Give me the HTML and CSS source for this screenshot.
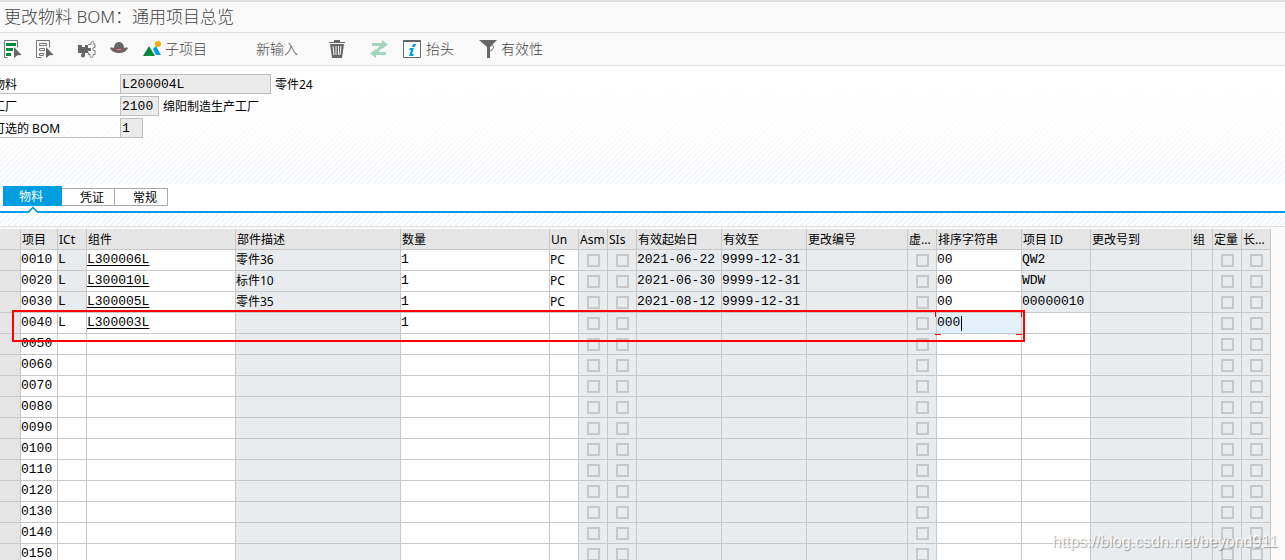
FILE: index.html
```html
<!DOCTYPE html>
<html lang="zh-CN">
<head>
<meta charset="utf-8">
<title>更改物料 BOM：通用项目总览</title>
<link rel="stylesheet" href="styles.css">
</head>
<body>
<div class="app">
  <header class="titlebar"><h1>更改物料 BOM：通用项目总览</h1></header>
  <nav class="toolbar">
    <button class="tool tool-select" aria-label="全选">
      <svg width="18" height="18" viewBox="0 0 18 18"><path d="M.5 17.500V.5h13v7M.5 17.500h3" fill="none" stroke="#777"/><path d="M2 3h10v3H2zM2 8h7v3H2zM2 13h5v3H2z" fill="#008a3b"/><path d="M10 7l7.500 8-4 .3-3.500 2.700z" fill="#666"/></svg>
    </button>
    <button class="tool tool-deselect" aria-label="取消选择">
      <svg width="18" height="18" viewBox="0 0 18 18"><path d="M.5 17.500V.5h13v7M.5 17.500h5M3.500 3.500h7v2h-7zM3.500 8.500h5v2h-5zM3.500 13.500h4v2h-4z" fill="none" stroke="#777"/><path d="M10 7l7.500 8-4 .3-3.500 2.700z" fill="#666"/></svg>
    </button>
    <button class="tool tool-parts" aria-label="组件">
      <svg width="20" height="18" viewBox="0 0 20 18"><path d="M1 5h4v2h3V5h3v8H8v2H5v-2H1z" fill="#666"/><circle cx="6" cy="15.500" r="2" fill="#666"/><path d="M9 8h5v3H9z" fill="#666"/><path d="M11.500 4.500H14c-1-4 4-4 3 0h1v3c-3-1-3 4 0 3v4h-2c1 4-4 4-3 0h-1.500v-2" fill="none" stroke="#777"/></svg>
    </button>
    <button class="tool tool-hat" aria-label="替代">
      <svg width="18" height="18" viewBox="0 0 18 18"><path d="M4 9c0-5 2-7 5-7s5 2 5 7z" fill="#666"/><path d="M0 8c2-1 3 0 4 0 3 2 7 2 10 0 1 0 2-1 4 0-1 3-5 5-9 5S1 11 0 8z" fill="#666"/><path d="M3 8c4 3 8 3 12 0" fill="none" stroke="#b94a42"/></svg>
    </button>
    <button class="tool tool-sub">
      <svg width="18" height="18" viewBox="0 0 18 18"><circle cx="15" cy="4" r="3" fill="#f5ab00"/><path d="M10 9l3-3 5 9h-5z" fill="#009de0"/><path d="M0 16L6 6l6 10z" fill="#008a3b"/></svg>
      <span>子项目</span>
    </button>
    <button class="tool tool-new"><span>新输入</span></button>
    <button class="tool tool-delete" aria-label="删除">
      <svg width="16" height="20" viewBox="0 0 16 20"><path d="M5 3V1h6v2h5v1H0V3z" fill="#666"/><path d="M1 5h14l-2 14H3z" fill="#666"/><path d="M4 7l1 9M7 7v9M9.500 7v9M12 7l-1 9" stroke="#f9f9f9"/></svg>
    </button>
    <button class="tool tool-swap" aria-label="切换">
      <svg width="18" height="18" viewBox="0 0 18 18"><path d="M2 4.500h11M13 5L5 13M5 13.500h11" fill="none" stroke="#a5d6bb" stroke-width="3"/><path d="M12 0l6 4.500L12 9zM6 9l-6 4.500L6 18z" fill="#a5d6bb"/></svg>
    </button>
    <button class="tool tool-head">
      <svg width="18" height="18" viewBox="0 0 18 18"><path d="M.5 1.500h17v16H.5z" fill="#fff" stroke="#666"/><path d="M0 1h18" stroke="#666" stroke-width="2"/><path d="M10 4h3l-1 3H9zM7 8h4l-2 6h2l-1 2H6l2-6H6z" fill="#009de0"/></svg>
      <span>抬头</span>
    </button>
    <button class="tool tool-valid">
      <svg width="18" height="18" viewBox="0 0 18 18"><path d="M0 0h18l-7 7v11H8V7z" fill="#666"/><path d="M12 6c4-2 3 4-1 5" fill="none" stroke="#666"/></svg>
      <span>有效性</span>
    </button>
  </nav>
  <section class="form">
    <div class="field"><label for="material">物料</label><input id="material" class="long" value="L200004L" readonly><span>零件24</span></div>
    <div class="field"><label for="plant">工厂</label><input id="plant" class="medium" value="2100" readonly><span>绵阳制造生产工厂</span></div>
    <div class="field"><label for="alternative">可选的 BOM</label><input id="alternative" class="short" value="1" readonly></div>
  </section>
  <div class="tabs">
    <button class="tab active">物料</button><button class="tab">凭证</button><button class="tab">常规</button>
  </div>
  <div class="strip"></div>
  <main class="grid">
    <table>
      <colgroup id="columns"></colgroup>
      <thead><tr id="headings"></tr></thead>
      <tbody id="items"></tbody>
    </table>
    <div class="highlight"></div>
  </main>
  <div class="watermark">https://blog.csdn.net/beyond911</div>
</div>
<script src="script.js"></script>
</body>
</html>
```

FILE: styles.css
```css
* { box-sizing: border-box; }
body {
  margin: 0;
  font: 12px/16px "Noto Sans", "Noto Sans CJK SC", sans-serif;
  color: #000;
  background: #f9f9f9;
}
button, input { font: inherit; color: inherit; border-radius: 0; }
.app { position: relative; height: 100vh; overflow: hidden; }
.titlebar {
  height: 33px;
  padding: 0 4px;
  border-top: 2px solid #e0e0e0;
  border-bottom: 1px solid #ddd;
}
h1 {
  margin: 0;
  font-size: 17px;
  font-weight: 300;
  line-height: 30px;
  color: #444;
  white-space: nowrap;
}
.toolbar {
  display: flex;
  align-items: center;
  height: 33px;
  padding-left: 4px;
  border-bottom: 1px solid #ddd;
  font-size: 14px;
  font-weight: 300;
  color: #444;
}
.tool {
  display: flex;
  align-items: center;
  flex: none;
  gap: 5px;
  padding: 0;
  border: 0;
  background: none;
}
.tool-deselect { margin-left: 14px; }
.tool-parts { margin-left: 23px; }
.tool-hat { margin-left: 13px; }
.tool-sub { margin-left: 15px; gap: 4px; }
.tool-new { margin-left: 49px; }
.tool-delete { margin-left: 31px; }
.tool-swap { margin-left: 25px; }
.tool-head { margin-left: 15px; }
.tool-valid { margin-left: 25px; gap: 4px; }
.form {
  display: flex;
  flex-direction: column;
  gap: 2px;
  height: 118px;
  padding-top: 8px;
  background:
    linear-gradient(#fff 20%, rgba(255, 255, 255, 0)),
    repeating-linear-gradient(135deg, #fff 0 2px, #f4f7fa 2px 4px);
}
.field { display: flex; height: 20px; line-height: 22px; }
.field label {
  width: 120px;
  border-bottom: 1px solid #bfbfbf;
  text-indent: -7px;
  white-space: nowrap;
}
.field input {
  height: 20px;
  padding: 0 1px;
  border: 1px solid #bfbfbf;
  background: #ebebeb;
  font: 13px/18px "Liberation Mono", monospace;
}
.field span { padding-left: 4px; }
.long { width: 151px; }
.medium { width: 39px; }
.short { width: 23px; }
.tabs {
  display: flex;
  align-items: flex-start;
  height: 29px;
  padding: 2px 3px 0;
  border-bottom: 2px solid #009de0;
  background: #fff;
}
.tab {
  width: 53px;
  height: 18px;
  margin-top: 2px;
  padding: 0 0 0 8px;
  border: 1px solid #aaa;
  border-left: 0;
  background: #fff;
  line-height: 18px;
}
.tab.active {
  position: relative;
  width: 59px;
  height: 20px;
  margin-top: 0;
  padding: 0 3px 0 0;
  border: 0;
  background: #009de0;
  color: #fff;
  line-height: 22px;
}
.tab.active::after {
  content: "";
  position: absolute;
  left: 25px;
  top: 22px;
  width: 8px;
  height: 8px;
  border: solid #009de0;
  border-width: 2px 0 0 2px;
  background: #fff;
  transform: rotate(45deg);
  clip-path: polygon(0 0, 100% 0, 0 100%);
}
.strip {
  height: 14px;
  border-bottom: 1px solid #ddd;
  background: repeating-linear-gradient(135deg, #fff 0 2px, #f1f8fc 2px 4px);
}
.grid { position: relative; padding-top: 2px; }
table { width: 1271px; table-layout: fixed; border-collapse: separate; border-spacing: 0; }
th, td {
  height: 21px;
  padding: 0;
  border-right: 1px solid #c8c8c8;
  border-bottom: 1px solid #c8c8c8;
  line-height: 20px;
  white-space: nowrap;
}
th {
  padding: 2px 0 0 1px;
  background: #e5e5e5;
  font-weight: 400;
  line-height: 18px;
  text-align: left;
  overflow: hidden;
}
td {
  background: #fff;
  font-family: "Liberation Mono", "Noto Sans CJK SC", monospace;
  font-size: 13px;
}
td.head { background: #e5e5e5; }
td.locked { background: #e8ecef; }
td.sans { font: 12px/20px "Noto Sans", "Noto Sans CJK SC", sans-serif; }
td a { color: #000; text-decoration: underline; text-underline-offset: 2px; }
.entry {
  display: block;
  width: 100%;
  height: 20px;
  padding: 0;
  border: 0;
  outline: 0;
  background: none;
}
.check input {
  appearance: none;
  display: block;
  width: 13px;
  height: 13px;
  margin: 0 auto;
  border: 2px solid #c8c8c8;
}
td.focused { position: relative; background: #e3f0fa; }
.focused .edit { display: flex; align-items: center; }
.focused .entry { width: 24px; }
.caret { width: 1px; height: 15px; background: #000; }
.corners {
  position: absolute;
  inset: -1px -1px -2px -2px;
  background:
    linear-gradient(#e00, #e00) left top / 1px 5px,
    linear-gradient(#e00, #e00) right top / 1px 5px,
    linear-gradient(#e00, #e00) left bottom / 6px 1px,
    linear-gradient(#e00, #e00) right bottom / 6px 1px;
  background-repeat: no-repeat;
  pointer-events: none;
}
.highlight {
  position: absolute;
  left: 12px;
  top: 83px;
  width: 1013px;
  height: 32px;
  border: 2px solid #f00;
  pointer-events: none;
}
.watermark {
  position: absolute;
  right: 7px;
  bottom: 8px;
  font: 16px/20px "Liberation Sans", Arial, sans-serif;
  color: rgba(255, 255, 255, 0.85);
  text-shadow: 1px 1px 1px rgba(0, 0, 0, 0.35);
}
```

FILE: script.js
```js
const columns = [
  ["", 21, "head"], ["项目", 37, "text"], ["ICt", 29, "type"], ["组件", 149, "link"],
  ["部件描述", 165, "desc"], ["数量", 149, "text"], ["Un", 29, "unit"],
  ["Asm", 29, "check"], ["SIs", 29, "check"], ["有效起始日", 85, "locked"],
  ["有效至", 85, "locked"], ["更改编号", 101, "locked"], ["虚...", 29, "check"],
  ["排序字符串", 85, "text"], ["项目 ID", 69, "type"], ["更改号到", 101, "locked"],
  ["组", 21, "locked"], ["定量", 29, "check"], ["长...", 29, "check"]
];

const rows = [
  { 2: "L", 3: "L300006L", 4: "零件36", 5: "1", 6: "PC", 9: "2021-06-22", 10: "9999-12-31", 13: "00", 14: "QW2" },
  { 2: "L", 3: "L300010L", 4: "标件10", 5: "1", 6: "PC", 9: "2021-06-30", 10: "9999-12-31", 13: "00", 14: "WDW" },
  { 2: "L", 3: "L300005L", 4: "零件35", 5: "1", 6: "PC", 9: "2021-08-12", 10: "9999-12-31", 13: "00", 14: "00000010" },
  { 2: "L", 3: "L300003L", 5: "1", 13: "000" }
];

const cell = (column, index, row, number) => {
  const [title, , kind] = column;
  const value = index === 1 ? String((number + 1) * 10).padStart(4, "0") : row[index] || "";
  const label = `aria-label="${title} ${number + 1}"`;
  if (kind === "head") return '<td class="head"></td>';
  if (kind === "check") return `<td class="check locked"><input type="checkbox" disabled ${label}></td>`;
  if (kind === "locked") return `<td class="locked">${value}</td>`;
  if (kind === "desc") return `<td class="locked sans">${value}</td>`;
  if (kind === "type" && number < 3) return `<td class="locked">${value}</td>`;
  if (kind === "link" && value) return `<td><a href="#">${value}</a></td>`;
  const entry = `<input class="entry" value="${value}" ${label}>`;
  if (index === 13 && number === 3) {
    return `<td class="focused"><div class="edit">${entry}<span class="caret"></span></div><span class="corners"></span></td>`;
  }
  return `<td class="${kind === "unit" ? "sans" : ""}">${entry}</td>`;
};

document.getElementById("columns").innerHTML =
  columns.map(([, width]) => `<col style="width:${width}px">`).join("");
document.getElementById("headings").innerHTML =
  columns.map(([title]) => `<th scope="col">${title}</th>`).join("");
document.getElementById("items").innerHTML =
  Array.from({ length: 16 }, (_, number) =>
    `<tr>${columns.map((column, index) => cell(column, index, rows[number] || {}, number)).join("")}</tr>`
  ).join("");
```
